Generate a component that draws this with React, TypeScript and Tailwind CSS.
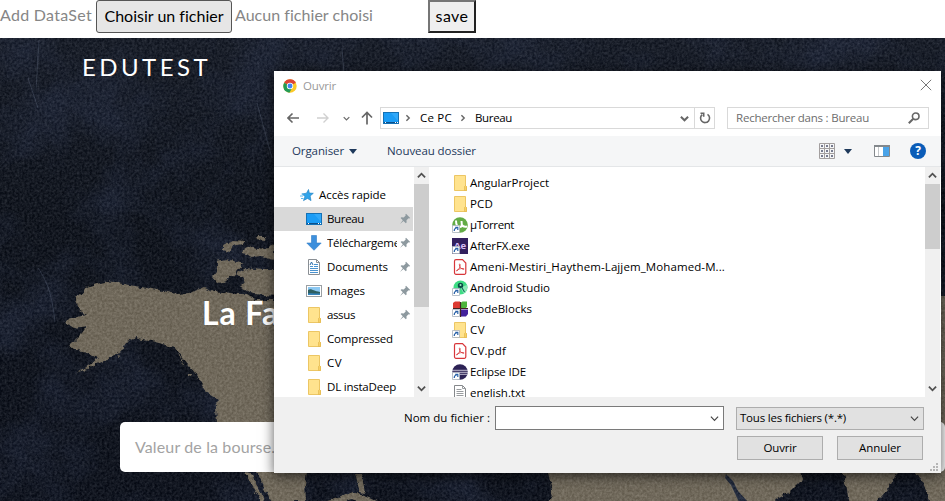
import { useLayoutEffect, useRef } from "react";
import type { ReactNode } from "react";

/* Single line of text tracked so that it fills exactly `w` pixels. */
function Fit({ w, children, className = "" }: { w: number; children: string; className?: string }) {
  const ref = useRef<HTMLSpanElement>(null);
  useLayoutEffect(() => {
    const el = ref.current;
    if (!el) return;
    el.style.letterSpacing = "0px";
    const natural = el.getBoundingClientRect().width;
    el.style.letterSpacing = `${(w - natural) / children.length}px`;
  }, [w, children]);
  return (
    <span ref={ref} className={`inline-block shrink-0 whitespace-pre [font-variant-ligatures:none] ${className}`}>
      {children}
    </span>
  );
}

const Chevron = ({ dir = "down", className = "" }: { dir?: "down" | "up" | "right"; className?: string }) => (
  <svg viewBox="0 0 10 10" className={`shrink-0 ${className}`} fill="none" stroke="currentColor">
    <path d={dir === "down" ? "M1 3l4 4 4-4" : dir === "up" ? "M1 7l4-4 4 4" : "M3 1.5l3.5 3.5L3 8.5"} />
  </svg>
);

const Desktop = () => (
  <svg viewBox="0 0 16 16" className="size-4 shrink-0">
    <rect x=".5" y="2.5" width="15" height="11" fill="#1b9cf5" stroke="#1471b5" />
    <path d="M1 12h14v1H1z" fill="#0b4f8a" />
    <path d="M2 12.5h1M12 12.5h1M14 12.5h1" stroke="#fff" />
    <path d="M8 3h7v8z" fill="#3fb0fb" opacity=".6" />
  </svg>
);

const Folder = () => (
  <svg viewBox="0 0 16 16" className="size-4 shrink-0">
    <path d="M2.5.5h11V11l1 .5v4h-12z" fill="#ffe38e" stroke="#ecc664" />
    <path d="M12.5 15.5v-4l1-1 1 1v4z" fill="#f7d067" stroke="#e4b94f" strokeWidth=".7" />
  </svg>
);

const Star = () => (
  <svg viewBox="0 0 16 16" className="size-4 shrink-0">
    <path d="M9.5 2.5l.8 3.600 4 .2-3.200 2.700.9 4.600-3.500-2.200-4 2.200 1.500-4L3.200 6.900l4.300-.7z" fill="#2fa4ea" stroke="#2484c4" strokeWidth=".7" />
    <path d="M1 9h3M2 11.5h2.5M2.5 7h2" stroke="#5bb8ee" />
  </svg>
);

const Download = () => (
  <svg viewBox="0 0 16 16" className="size-4 shrink-0">
    <path d="M5.5.5h5V8h4.7L8 15.3.8 8h4.7z" fill="#3d8fdc" stroke="#2f7cc6" strokeWidth=".6" />
  </svg>
);

const Doc = () => (
  <svg viewBox="0 0 16 16" className="size-4 shrink-0">
    <path d="M2.5.5h8l3 3v12h-11z" fill="#fff" stroke="#8a8f94" />
    <path d="M10.5.5v3h3" fill="none" stroke="#8a8f94" />
    <path d="M4 7.5h3M4 9.5h8M4 11.5h8M4 13.5h8M8 5.5h4M8 7.5h4" stroke="#4b93cf" />
    <path d="M4 6l1.5-3L7 6" fill="none" stroke="#2a6ca8" />
  </svg>
);

const Picture = () => (
  <svg viewBox="0 0 16 16" className="size-4 shrink-0">
    <rect x=".5" y="2.5" width="15" height="11" fill="#fff" stroke="#9a9fa3" />
    <path d="M2 4h12v8H2z" fill="#8cc8f2" />
    <path d="M2 7c3-2 5 1 12 2v3H2z" fill="#2d5f62" />
    <path d="M2 10.5c4-1 8 .5 12 0V12H2z" fill="#3684bd" />
  </svg>
);

const Pin = () => (
  <svg viewBox="0 0 12 12" className="size-3 shrink-0">
    <path d="M7 .8L11.2 5l-1 .4-.7-.2-2 2 .1 2.2-.8.9L4.500 8 1 11l2.800-3.700L1.600 5l.9-.8 2.200.2 2-2-.3-.8z" fill="#8d999f" />
  </svg>
);

const Shortcut = () => (
  <>
    <path d="M.5 8.500h7v7h-7z" fill="#fff" stroke="#a9b3bd" strokeWidth=".8" />
    <path d="M2.200 14c0-2 1-3 2.600-3M3.200 10.300h2.600V13" fill="none" stroke="#2861a8" strokeWidth="1.200" />
  </>
);

const Svg = ({ children }: { children: ReactNode }) => (
  <svg viewBox="0 0 16 16" className="size-4 shrink-0">{children}</svg>
);

const UTorrent = () => (
  <Svg>
    <circle cx="8" cy="8" r="7.800" fill="#62ab46" />
    <path d="M4 3.500c0 4 1 6.500 4 6.500 2 0 2-2 1.500-6M10 8c1 2 2.500 2 5 1.500" fill="none" stroke="#fff" strokeWidth="2" />
    <Shortcut />
  </Svg>
);

const AfterFx = () => (
  <Svg>
    <path d="M0 0h16v16H0z" fill="#33205f" />
    <text x="2" y="10.500" fontSize="9.500" fontWeight="700" fill="#d6bdf5" fontFamily="Open Sans, sans-serif">Ae</text>
    <Shortcut />
  </Svg>
);

const Pdf = () => (
  <Svg>
    <path d="M4 .700h6.500l3.300 3.300v9.800a1.500 1.500 0 01-1.500 1.500H4a1.500 1.500 0 01-1.500-1.500V2.200A1.500 1.500 0 014 .700z" fill="#fff" stroke="#d8363a" strokeWidth="1.200" />
    <path d="M4.800 12c1.800-1 3.500-4 3.400-6.300 0-.9-1-.9-.9 0 .2 2.300 2 4.300 4.200 4.700.8 0 .6-.8 0-.9-2-.1-4.300.3-6.400 1.500-.7.400-.7 1.100-.3 1z" fill="none" stroke="#d8363a" strokeWidth=".8" />
  </Svg>
);

const Android = () => (
  <Svg>
    <circle cx="8.500" cy="7.500" r="7" fill="#3ddc84" />
    <path d="M8.500 7.500L15 5a7 7 0 01-3.500 8.500z" fill="#8be9b7" />
    <circle cx="8.500" cy="5.500" r="2.700" fill="#0b4a45" />
    <path d="M7.500 7l-2.200 5M9.500 7l3 5" stroke="#176c5b" strokeWidth="1.200" />
    <circle cx="8.500" cy="5" r="1" fill="#9ceac2" />
    <Shortcut />
  </Svg>
);

const CodeBlocks = () => (
  <Svg>
    <path d="M1 2l2-1.500h5V8H1z" fill="#dd3b32" />
    <path d="M8.500 2l2-1.500H15v5L13.500 8h-5z" fill="#4db53c" />
    <path d="M8.500 8.500H16V13l-2 2.500H8.500z" fill="#43219c" />
    <path d="M1 7.500h15M8.500 1v15" fill="none" stroke="#442323" strokeWidth="1.200" />
    <Shortcut />
  </Svg>
);

const FolderLink = () => (
  <Svg>
    <path d="M2.500.5h11V11l1 .5v4h-12z" fill="#ffe38e" stroke="#ecc664" />
    <path d="M12.500 15.500v-4l1-1 1 1v4z" fill="#f7d067" stroke="#e4b94f" strokeWidth=".7" />
    <Shortcut />
  </Svg>
);

const Eclipse = () => (
  <Svg>
    <circle cx="8" cy="8" r="7.800" fill="#2c2255" />
    <path d="M0 6.300h16M0 8.300h16M.5 10.300h15" stroke="#e6e3f0" strokeWidth=".8" />
    <Shortcut />
  </Svg>
);

const TextFile = () => (
  <Svg>
    <path d="M2.500.5h8l3 3v12h-11z" fill="#fff" stroke="#85888b" />
    <path d="M10.500.5v3h3M4.500 4.500h5M4.500 6.500h7M4.500 8.500h7M4.500 10.500h7M4.500 12.500h7" fill="none" stroke="#999c9f" />
  </Svg>
);

const places = [
  { name: "Bureau", w: 37, icon: <Desktop />, pin: true, active: true },
  { name: "Téléchargements", w: 89, icon: <Download />, pin: true },
  { name: "Documents", w: 61, icon: <Doc />, pin: true },
  { name: "Images", w: 38, icon: <Picture />, pin: true },
  { name: "assus", w: 28, icon: <Folder />, pin: true },
  { name: "Compressed", w: 66, icon: <Folder /> },
  { name: "CV", w: 15, icon: <Folder /> },
  { name: "DL instaDeep", w: 69, icon: <Folder /> },
];

const files = [
  { name: "AngularProject", w: 79, icon: <Folder /> },
  { name: "PCD", w: 23, icon: <Folder /> },
  { name: "µTorrent", w: 44, icon: <UTorrent /> },
  { name: "AfterFX.exe", w: 60, icon: <AfterFx /> },
  { name: "Ameni-Mestiri_Haythem-Lajjem_Mohamed-M...", w: 255, icon: <Pdf /> },
  { name: "Android Studio", w: 80, icon: <Android /> },
  { name: "CodeBlocks", w: 62, icon: <CodeBlocks /> },
  { name: "CV", w: 15, icon: <FolderLink /> },
  { name: "CV.pdf", w: 36, icon: <Pdf /> },
  { name: "Eclipse IDE", w: 56, icon: <Eclipse /> },
  { name: "english.txt", w: 55, icon: <TextFile /> },
];

/* World map backdrop: dark blue sea with sand-coloured land, both grained. */
function MapBackdrop() {
  return (
    <svg viewBox="0 38 945 463" className="absolute inset-0 h-full w-full" preserveAspectRatio="none">
      <defs>
        <filter id="grain" x="0" y="0" width="100%" height="100%" colorInterpolationFilters="sRGB">
          <feTurbulence type="fractalNoise" baseFrequency="0.4" numOctaves="3" seed="4" />
          <feColorMatrix values="0.7 0 0 0 -0.18  0.7 0 0 0 -0.17  0.7 0 0 0 -0.15  0 0 0 0 0.28" />
        </filter>
        <filter id="clouds" x="0" y="0" width="100%" height="100%" colorInterpolationFilters="sRGB">
          <feTurbulence type="fractalNoise" baseFrequency="0.014" numOctaves="5" seed="11" />
          <feColorMatrix values="0 0 0 0 0.15  0 0 0 0 0.19  0 0 0 0 0.3  2.8 0 0 0 -1.2" />
        </filter>
        <filter id="coast" x="-5%" y="-5%" width="110%" height="110%" colorInterpolationFilters="sRGB">
          <feTurbulence type="fractalNoise" baseFrequency="0.16" numOctaves="3" seed="3" result="n" />
          <feDisplacementMap in="SourceGraphic" in2="n" scale="6" xChannelSelector="R" yChannelSelector="G" />
        </filter>
        <linearGradient id="sea" x1="0" y1="0" x2="0" y2="1">
          <stop offset="0" stopColor="#141a27" />
          <stop offset=".4" stopColor="#0a0f19" />
          <stop offset="1" stopColor="#080d19" />
        </linearGradient>
      </defs>
      <rect y="38" width="945" height="463" fill="url(#sea)" />
      <rect y="38" width="945" height="463" filter="url(#clouds)" opacity=".5" />
      <g fill="#8b806b" filter="url(#coast)">
        <path d="M76 298l5-3 6-8 10-3 11-3 15 3 24 4 30 6 12-1 11-4 5-2 8 4 34 4 8 5h35v215h-10l-10-15-13-28-33-22-7-28-1-15 5-9-17-11-8-14-14-16-6-9-17-5-23-6-8 3-8 12-12 7-21 10-12 5 13-8 11-8-7-2-8-5-8-1-6-5 12-12 5-7-13 2-11-7 14-4 10-2-8-4z" />
        <path d="M223 245l10-5 11 1-1 4-10 2-3 5-7-2zM254 239l5-3h7l-1 4zM241 252l7-5 10 2 10-2 7-3v15l-14-3-8 1-12-4zM217 261l9-2 18 5-7 8-10 9-9 2-5-6 4-5zM236 274l10-6 17 2h12v26l-21-2-14-7 6-6z" />
        <path d="M117 356l5-2-3 3zM188 373h4l-1 3-3-1zM178 353l4 6 3 8-4-6zM204 387l14 6 5 6-4 1-13-8z" />
        <path d="M257 472h50l-2 12 1 17h-25l-10-9zM244 472l8 1 13 31-4-2zM355 474h7l3 20-5-1zM328 501l13-4 12-5 17 6 9 4-10 1-18-4-9 4z" />
        <path d="M547 470h253l2 10-12 12-22 12H549l4-14zM842 470h57l-12 20-12 14h-25zM914 470h36v37h-20l-4-18zM937 295h12v180h-12z" />
      </g>
      <path d="M726 474l7 7 5 10 10 11h-9l-8-17-6-7z" fill="#222c42" />
      <rect y="38" width="945" height="463" filter="url(#grain)" />
      <path d="M39 40l-3 50M28 78l10 30M257 103l15 55M38 268c10 14 14 28 17 54M342 48l3 40" fill="none" stroke="#7d8ba3" strokeWidth=".8" opacity=".3" />
    </svg>
  );
}

function ScrollBar({ thumb }: { thumb: string }) {
  return (
    <div className="flex w-[15px] shrink-0 flex-col items-center bg-[#f0f0f0] text-[#505050]">
      <div className="flex h-[17px] items-center">
        <Chevron dir="up" className="size-[9px] stroke-2" />
      </div>
      <div className={`w-full bg-[#cdcdcd] ${thumb}`} />
      <div className="flex-1" />
      <div className="flex h-[17px] items-center">
        <Chevron className="size-[9px] stroke-2" />
      </div>
    </div>
  );
}

function FileDialog() {
  return (
    <div className="absolute top-[71px] left-[274px] flex h-[402px] w-[667px] flex-col bg-white font-['Open_Sans','Noto_Sans',sans-serif] text-[11.5px] leading-4 text-black shadow-[0_3px_12px_rgba(0,0,0,0.65)]">
      <div className="flex h-[30px] items-center pr-[9px] pl-[9px]">
        <svg viewBox="0 0 48 48" className="size-[14px]">
          <circle cx="24" cy="24" r="23" fill="#fbc927" />
          <path d="M24 24L4 12.500A23 23 0 0144 12.500z" fill="#db4437" />
          <path d="M4 12.500A23 23 0 0022 47l10-18-8-5z" fill="#239b56" />
          <circle cx="24" cy="24" r="11" fill="#fff" />
          <circle cx="24" cy="24" r="8.500" fill="#4285f4" />
        </svg>
        <Fit w={33} className="ml-1.5 text-[#999]">Ouvrir</Fit>
        <svg viewBox="0 0 12 12" className="mt-[-2px] ml-auto size-3" stroke="#777" fill="none">
          <path d="M.8.800l10.400 10.400M11.200.800L.8 11.200" />
        </svg>
      </div>

      <div className="flex h-[35px] items-center pb-px pl-[13px] text-[#6b6b6b]">
        <svg viewBox="0 0 12 12" className="size-3" fill="none" stroke="#666" strokeWidth="1.600">
          <path d="M12 6H1M5.500 1.500L1 6l4.500 4.500" />
        </svg>
        <svg viewBox="0 0 12 12" className="ml-[18px] size-3" fill="none" stroke="#d0d0d0" strokeWidth="1.400">
          <path d="M0 6h11M6.500 1.500L11 6l-4.500 4.500" />
        </svg>
        <Chevron className="ml-[14px] size-[7px] stroke-[1.800]" />
        <svg viewBox="0 0 12 14" className="ml-[11px] h-[14px] w-3" fill="none" stroke="#666" strokeWidth="1.700">
          <path d="M6 13.500V1.500M1 6.500l5-5 5 5" />
        </svg>
        <div className="ml-[7px] flex h-[22px] w-[335px] items-center border border-[#d9d9d9] pl-[2px] text-black">
          <Desktop />
          <Chevron dir="right" className="ml-[5px] size-2 stroke-[1.800] text-[#666]" />
          <Fit w={32} className="ml-[8px]">Ce PC</Fit>
          <Chevron dir="right" className="ml-[7px] size-2 stroke-[1.800] text-[#666]" />
          <Fit w={37} className="ml-[8px]">Bureau</Fit>
          <Chevron className="mr-[5px] ml-auto size-[9px] stroke-[2.200] text-[#666]" />
          <div className="flex h-full w-5 items-center justify-center border-l border-[#d9d9d9]">
            <svg viewBox="0 0 12 12" className="size-3" fill="none" stroke="#666" strokeWidth="1.600">
              <path d="M8.500 2.300A4.500 4.500 0 113.200 2.600M1.500 1.300h3.200v3.400" />
            </svg>
          </div>
        </div>
        <div className="ml-3 flex h-[22px] w-[202px] items-center justify-between border border-[#d9d9d9] pr-[8px] pl-2 text-[#6d6d6d]">
          <Fit w={133}>Rechercher dans : Bureau</Fit>
          <svg viewBox="0 0 12 12" className="size-3" fill="none" stroke="#666" strokeWidth="1.600">
            <circle cx="7.700" cy="4.300" r="3.300" />
            <path d="M5.300 6.700L.8 11.200" strokeWidth="2" />
          </svg>
        </div>
      </div>

      <div className="flex h-[31px] items-center border-b border-[#e4e6e8] bg-[#f5f6f7] pr-[15px] pl-[18px] text-[#1e395b]">
        <Fit w={52}>Organiser</Fit>
        <svg viewBox="0 0 8 5" className="ml-[5px] h-[5px] w-2" fill="#1e395b"><path d="M0 0h8L4 5z" /></svg>
        <Fit w={89} className="ml-[30px]">Nouveau dossier</Fit>
        <svg viewBox="0 0 16 16" className="ml-auto size-4" fill="none">
          <path d="M.5.500h15v15H.5zM5.500.500v15M10.500.500v15M.5 5.500h15M.5 10.500h15" stroke="#a39f9f" />
          <path d="M2 3h2M7 3h2M12 3h2M2 8h2M7 8h2M12 8h2M2 13h2M7 13h2M12 13h2" stroke="#4d536e" strokeWidth="1.500" />
        </svg>
        <svg viewBox="0 0 8 5" className="ml-[9px] h-[5px] w-2" fill="#1e395b"><path d="M0 0h8L4 5z" /></svg>
        <svg viewBox="0 0 16 12" className="ml-[22px] h-3 w-4">
          <path d="M.5.500h15v11H.5z" fill="#fff" stroke="#83888c" />
          <path d="M0 0h16v2H0z" fill="#83888c" />
          <path d="M9 2h6v9H9z" fill="#4aa3e8" />
          <path d="M4.500 2v9" stroke="#c5c8cb" />
        </svg>
        <div className="ml-5 flex size-4 items-center justify-center rounded-full bg-[#0a5cb8] text-[12px] leading-none font-bold text-white">?</div>
      </div>

      <div className="flex h-[230px]">
        <div className="flex w-[140px] flex-col pt-4">
          <div className="flex h-6 shrink-0 items-center gap-[4px] pl-[25px]">
            <Star />
            <Fit w={67}>Accès rapide</Fit>
          </div>
          {places.map((p) => (
            <div key={p.name} className={`flex h-6 w-[139px] shrink-0 items-center pr-[2px] pl-8 ${p.active ? "bg-[#d9d9d9]" : ""}`}>
              {p.icon}
              <div className={`ml-[5px] flex h-4 overflow-hidden ${p.pin ? "w-[70px]" : "w-20"}`}>
                <Fit w={p.w}>{p.name}</Fit>
              </div>
              {p.pin && <div className="ml-auto"><Pin /></div>}
            </div>
          ))}
        </div>
        <ScrollBar thumb="h-[123px]" />
        <div className="flex min-w-0 flex-1 flex-col overflow-hidden pt-[5px] pl-[23px]">
          {files.map((f, i) => (
            <div key={i} className="flex h-[21px] shrink-0 items-center gap-[2px]">
              {f.icon}
              <Fit w={f.w}>{f.name}</Fit>
            </div>
          ))}
        </div>
        <ScrollBar thumb="h-[65px]" />
        <div className="w-px bg-white" />
      </div>

      <div className="relative flex flex-1 flex-col bg-[#f0f0f0] pt-[9px]">
        <div className="flex items-center pl-[130px]">
          <Fit w={86}>Nom du fichier :</Fit>
          <div className="ml-[5px] flex h-6 w-[229px] items-center justify-end border border-[#7a7a7a] bg-white pr-1">
            <Chevron className="size-[9px] stroke-[1.300] text-[#444]" />
          </div>
          <div className="ml-3 flex h-[23px] w-[188px] items-center justify-between border border-[#adadad] bg-[#e1e1e1] pr-1 pl-[3px]">
            <Fit w={106}>Tous les fichiers (*.*)</Fit>
            <Chevron className="size-[9px] stroke-[1.300] text-[#444]" />
          </div>
        </div>
        <div className="mt-[6px] flex gap-[14px] pl-[463px]">
          <button className="flex h-6 w-[86px] items-center justify-center border border-[#adadad] bg-[#e1e1e1]">
            <Fit w={33}>Ouvrir</Fit>
          </button>
          <button className="flex h-6 w-[86px] items-center justify-center border border-[#adadad] bg-[#e1e1e1]">
            <Fit w={42}>Annuler</Fit>
          </button>
        </div>
        <svg viewBox="0 0 8 8" className="absolute right-[3px] bottom-[2px] size-2" fill="#b5b5b5">
          <path d="M6 0h2v2H6zM3 3h2v2H3zM6 3h2v2H6zM0 6h2v2H0zM3 6h2v2H3zM6 6h2v2H6z" />
        </svg>
      </div>
    </div>
  );
}

export default function App() {
  return (
    <div className="relative flex h-[501px] w-[945px] flex-col overflow-hidden bg-white font-['Lato',sans-serif] text-[16px] leading-6">
      <header className="flex h-[38px] shrink-0 items-start text-[#868686]">
        <Fit w={92} className="mt-[3px]">Add DataSet</Fit>
        <button className="ml-1 flex h-[33px] w-[136px] items-center justify-center rounded-[3px] border border-[#555] bg-[#e6e6e6] pb-[2px] text-black">
          <Fit w={119}>Choisir un fichier</Fit>
        </button>
        <Fit w={138} className="mt-[3px] ml-[3px]">Aucun fichier choisi</Fit>
        <button className="ml-[55px] flex h-[33px] w-12 items-center justify-center border-2 border-t-[#767676] border-r-[#222] border-b-[#222] border-l-[#767676] bg-[#efefef] pb-[2px] text-black">
          <Fit w={33}>save</Fit>
        </button>
      </header>
      <main className="relative flex flex-1 flex-col">
        <MapBackdrop />
        <div className="relative flex flex-1 flex-col text-white">
          <div className="pt-[13px] pl-[82px] text-[24px] leading-8">
            <Fit w={129}>EDUTEST</Fit>
          </div>
          <h1 className="mt-[208px] pl-[202px] text-[32px] leading-[44px] font-bold">
            <Fit w={77}>La Fa</Fit>
          </h1>
          <div className="mt-[87px] ml-[120px] flex h-[50px] w-[825px] items-center rounded-[5px] bg-white pl-[15px] text-[#a3a3a3]">
            <Fit w={148}>Valeur de la bourse...</Fit>
          </div>
        </div>
      </main>
      <FileDialog />
    </div>
  );
}
